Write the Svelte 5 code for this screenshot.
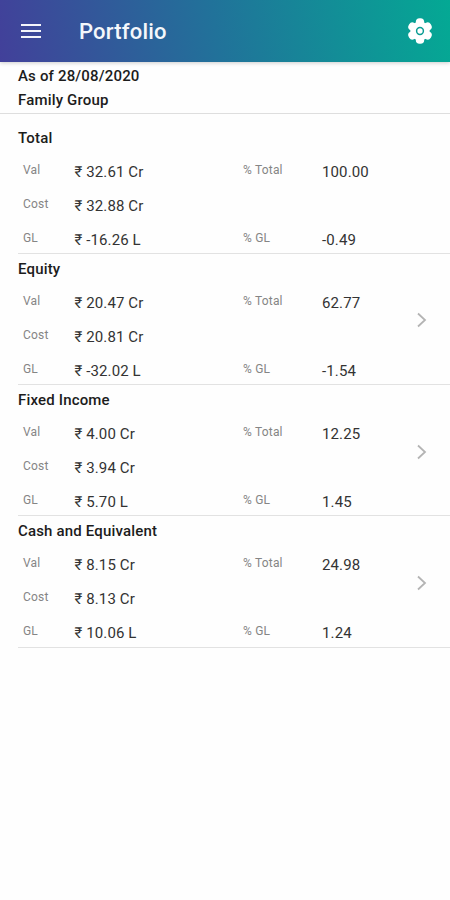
<script>
  let date = '28/08/2020';
  let group = 'Family Group';

  let sections = [
    { name: 'Total', val: '32.61 Cr', cost: '32.88 Cr', gl: '-16.26 L', total: '100.00', pctGl: '-0.49', link: false },
    { name: 'Equity', val: '20.47 Cr', cost: '20.81 Cr', gl: '-32.02 L', total: '62.77', pctGl: '-1.54', link: true },
    { name: 'Fixed Income', val: '4.00 Cr', cost: '3.94 Cr', gl: '5.70 L', total: '12.25', pctGl: '1.45', link: true },
    { name: 'Cash and Equivalent', val: '8.15 Cr', cost: '8.13 Cr', gl: '10.06 L', total: '24.98', pctGl: '1.24', link: true }
  ];
</script>

<header>
  <button class="menu" aria-label="Menu">
    <span></span>
    <span></span>
    <span></span>
  </button>
  <h1>Portfolio</h1>
  <button class="settings" aria-label="Settings">
    <svg width="26" height="26" viewBox="-13 -13 26 26">
      <g fill="#fff">
        <circle r="9.6" />
        {#each [0, 60, 120] as angle}
          <rect x="-4.2" y="-12.7" width="8.4" height="25.4" rx="3.8" transform="rotate({angle})" />
        {/each}
      </g>
      <circle r="3.4" fill="none" stroke="#0a9c93" stroke-width="1.5" />
    </svg>
  </button>
</header>

<div class="summary">
  <p>As of {date}</p>
  <p>{group}</p>
</div>

<main>
  {#each sections as s}
    <section>
      <div class="body">
        <h2>{s.name}</h2>
        <dl>
          <dt>Val</dt>
          <dd>₹ {s.val}</dd>
          <dt>% Total</dt>
          <dd>{s.total}</dd>
          <dt>Cost</dt>
          <dd class="wide">₹ {s.cost}</dd>
          <dt>GL</dt>
          <dd>₹ {s.gl}</dd>
          <dt>% GL</dt>
          <dd>{s.pctGl}</dd>
        </dl>
      </div>
      {#if s.link}
        <svg class="chevron" width="12" height="16" viewBox="0 0 12 16">
          <path d="M2 1.5L9 8L2 14.5" fill="none" stroke="#b4b4b4" stroke-width="1.8" />
        </svg>
      {/if}
    </section>
  {/each}
</main>

<style>
  :global(body) {
    background: #fefefe;
    font-family: Roboto, 'Noto Sans', sans-serif;
    color: #1c1c1c;
  }

  header {
    display: flex;
    align-items: center;
    height: 62px;
    padding: 0 17px 0 21px;
    box-sizing: border-box;
    background: linear-gradient(80deg, #42409a 0%, #21729a 48%, #04a994 100%);
    box-shadow: 0 1px 4px rgba(0, 0, 0, 0.2);
  }

  button {
    display: flex;
    padding: 0;
    border: 0;
    background: none;
  }

  .menu {
    flex-direction: column;
    gap: 4px;
    width: 20px;
  }

  .menu span {
    height: 2px;
    width: 20px;
    background: #f4f5fb;
  }

  h1 {
    flex: 1;
    margin: 0 0 0 38px;
    color: #f4f7fb;
    font-size: 22px;
    font-weight: 500;
    letter-spacing: 0.2px;
  }

  .summary {
    height: 48px;
    padding: 3px 18px 0;
    border-bottom: 1px solid #dedede;
  }

  .summary p {
    margin: 0;
    font-size: 15px;
    font-weight: 500;
    line-height: 23.5px;
    letter-spacing: 0.17px;
  }

  main {
    padding: 8.5px 0 0 18px;
  }

  section {
    display: flex;
    align-items: center;
    height: 131.25px;
    box-sizing: border-box;
    border-bottom: 1px solid #e2e2e2;
  }

  .body {
    flex: 1;
    align-self: flex-start;
  }

  h2 {
    margin: 0;
    padding-top: 3px;
    font-size: 15px;
    font-weight: 500;
    line-height: 24px;
    letter-spacing: 0.17px;
  }

  dl {
    display: grid;
    grid-template-columns: 51.5px 168.5px 79px 1fr;
    grid-auto-rows: 34px;
    margin: 0;
    padding: 9px 0 0 5px;
    height: 94px;
  }

  dt {
    color: #858585;
    font-size: 12px;
    line-height: 22px;
    letter-spacing: 0.2px;
  }

  dd {
    margin: 0;
    color: #333;
    font-size: 15px;
    line-height: 26px;
    letter-spacing: 0.12px;
  }

  .wide {
    grid-column: span 3;
  }

  .chevron {
    margin: 3px 22px 0 0;
  }
</style>
